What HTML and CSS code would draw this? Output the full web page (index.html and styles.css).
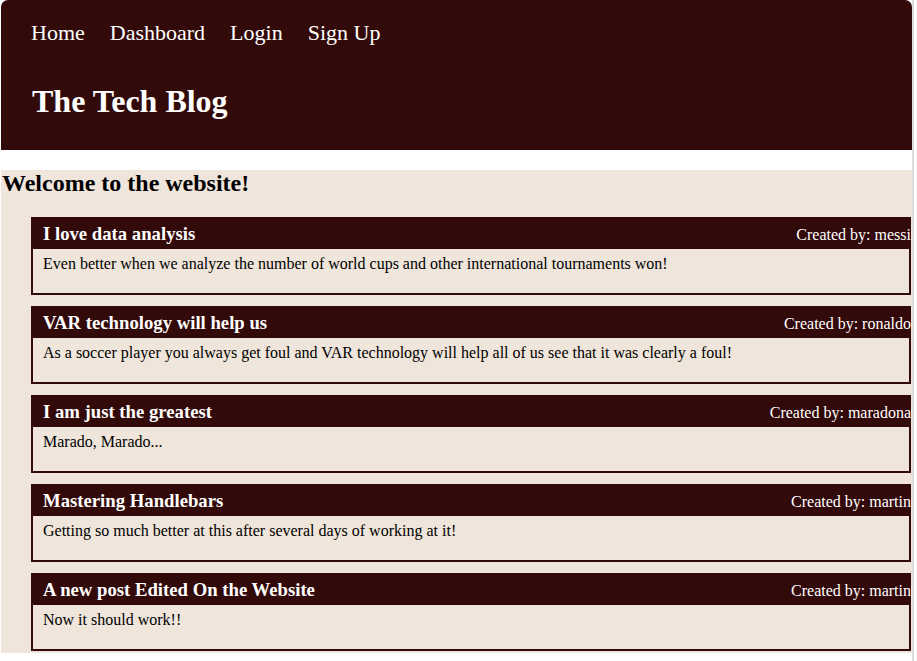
FILE: index.html
```html
<!DOCTYPE html>
<html lang="en">
<head>
<meta charset="utf-8">
<title>The Tech Blog</title>
<link rel="stylesheet" href="styles.css">
</head>
<body>
<div class="page">
  <header class="site-header">
    <nav class="nav">
      <a href="#">Home</a>
      <a href="#">Dashboard</a>
      <a href="#">Login</a>
      <a href="#">Sign Up</a>
    </nav>
    <h1 class="site-title">The Tech Blog</h1>
  </header>
  <main class="main">
    <h2 class="welcome">Welcome to the website!</h2>
    <article class="post">
      <div class="post-head"><h3 class="post-title">I love data analysis</h3><span class="post-author">Created by: messi</span></div>
      <div class="post-body">Even better when we analyze the number of world cups and other international tournaments won!</div>
    </article>
    <article class="post">
      <div class="post-head"><h3 class="post-title">VAR technology will help us</h3><span class="post-author">Created by: ronaldo</span></div>
      <div class="post-body">As a soccer player you always get foul and VAR technology will help all of us see that it was clearly a foul!</div>
    </article>
    <article class="post">
      <div class="post-head"><h3 class="post-title">I am just the greatest</h3><span class="post-author">Created by: maradona</span></div>
      <div class="post-body">Marado, Marado...</div>
    </article>
    <article class="post">
      <div class="post-head"><h3 class="post-title">Mastering Handlebars</h3><span class="post-author">Created by: martin</span></div>
      <div class="post-body">Getting so much better at this after several days of working at it!</div>
    </article>
    <article class="post">
      <div class="post-head"><h3 class="post-title">A new post Edited On the Website</h3><span class="post-author">Created by: martin</span></div>
      <div class="post-body">Now it should work!!</div>
    </article>
  </main>
</div>
</body>
</html>
```
FILE: styles.css
```css
html, body {
  margin: 0;
  padding: 0;
  background: #ffffff;
  font-family: "Liberation Serif", "Times New Roman", serif;
}

.page {
  width: 911px;
  margin-left: 1px;
  min-height: 100vh;
  border-right: 2px solid #dcdcdc;
}

.site-header {
  background: #330a0a;
  color: #ffffff;
  height: 150px;
  box-sizing: border-box;
  padding: 20px 30px 0 30px;
  border-radius: 7px 7px 0 0;
  margin-bottom: 20px;
}

.nav {
  display: flex;
  gap: 25px;
  font-size: 22px;
  line-height: 25px;
}

.nav a {
  color: #ffffff;
  text-decoration: none;
}

.site-title {
  margin: 38px 0 0 1px;
  font-size: 32px;
  line-height: 37px;
  font-weight: bold;
}

.main {
  background: #efe5db;
  padding: 0 1px 2px 0;
}

.welcome {
  margin: 0 0 20px 1px;
  font-size: 24px;
  line-height: 27px;
  font-weight: bold;
  color: #000000;
}

.post {
  margin: 0 0 11px 30px;
}

.post:last-child {
  margin-bottom: 0;
}

.post-head {
  background: #330a0a;
  color: #ffffff;
  height: 32px;
  box-sizing: border-box;
  padding: 6px 0 0 12px;
  display: flex;
  justify-content: space-between;
  align-items: baseline;
}

.post-title {
  margin: 0;
  font-size: 18.72px;
  line-height: 21px;
  font-weight: bold;
}

.post-author {
  font-size: 16px;
  line-height: 21px;
}

.post-body {
  border: 2px solid #330a0a;
  border-top: 0;
  padding: 6px 10px 20px 10px;
  font-size: 16px;
  line-height: 18px;
  color: #000000;
}
```
